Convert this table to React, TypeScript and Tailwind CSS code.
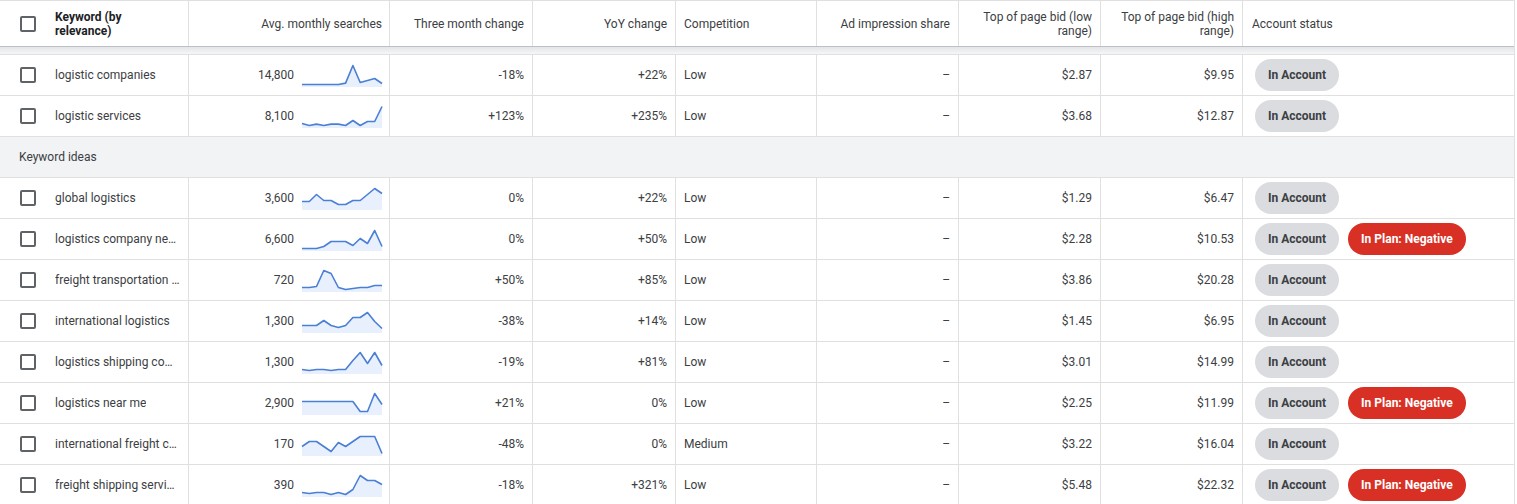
import React from "react"

type Row = {
  keyword: string
  searches: string
  trend: number[]
  threeMonth: string
  yoy: string
  competition: string
  low: string
  high: string
  negative?: boolean
}

const cols = "grid grid-cols-[189px_201px_143px_143px_141px_142px_142px_142px_1fr]"

const added: Row[] = [
  { keyword: "logistic companies", searches: "14,800", trend: [0.05, 0.05, 0.05, 0.05, 0.05, 0.05, 0.12, 1, 0.15, 0.25, 0.35, 0.1], threeMonth: "-18%", yoy: "+22%", competition: "Low", low: "$2.87", high: "$9.95" },
  { keyword: "logistic services", searches: "8,100", trend: [0.15, 0.05, 0.12, 0.05, 0.12, 0.12, 0.05, 0.3, 0.05, 0.25, 0.25, 1], threeMonth: "+123%", yoy: "+235%", competition: "Low", low: "$3.68", high: "$12.87" },
]

const ideas: Row[] = [
  { keyword: "global logistics", searches: "3,600", trend: [0.35, 0.35, 0.7, 0.4, 0.4, 0.2, 0.2, 0.4, 0.4, 0.7, 1, 0.75], threeMonth: "0%", yoy: "+22%", competition: "Low", low: "$1.29", high: "$6.47" },
  { keyword: "logistics company near me", searches: "6,600", trend: [0.05, 0.05, 0.05, 0.15, 0.4, 0.4, 0.4, 0.2, 0.55, 0.3, 0.95, 0.15], threeMonth: "0%", yoy: "+50%", competition: "Low", low: "$2.28", high: "$10.53", negative: true },
  { keyword: "freight transportation services", searches: "720", trend: [0.15, 0.15, 0.2, 1, 0.85, 0.15, 0.05, 0.1, 0.15, 0.15, 0.25, 0.25], threeMonth: "+50%", yoy: "+85%", competition: "Low", low: "$3.86", high: "$20.28" },
  { keyword: "international logistics", searches: "1,300", trend: [0.3, 0.3, 0.3, 0.55, 0.3, 0.2, 0.3, 0.7, 0.7, 0.95, 0.5, 0.15], threeMonth: "-38%", yoy: "+14%", competition: "Low", low: "$1.45", high: "$6.95" },
  { keyword: "logistics shipping company", searches: "1,300", trend: [0.15, 0.1, 0.15, 0.15, 0.1, 0.15, 0.15, 0.6, 1, 0.45, 1, 0.35], threeMonth: "-19%", yoy: "+81%", competition: "Low", low: "$3.01", high: "$14.99" },
  { keyword: "logistics near me", searches: "2,900", trend: [0.6, 0.6, 0.6, 0.6, 0.6, 0.6, 0.6, 0.6, 0.1, 0.1, 1, 0.45], threeMonth: "+21%", yoy: "0%", competition: "Low", low: "$2.25", high: "$11.99", negative: true },
  { keyword: "international freight companies", searches: "170", trend: [0.4, 0.65, 0.65, 0.4, 0.15, 0.6, 0.4, 0.65, 0.9, 0.9, 0.9, 0.05], threeMonth: "-48%", yoy: "0%", competition: "Medium", low: "$3.22", high: "$16.04" },
  { keyword: "freight shipping services", searches: "390", trend: [0.15, 0.1, 0.15, 0.15, 0.05, 0.15, 0.05, 0.3, 1, 0.75, 0.75, 0.55], threeMonth: "-18%", yoy: "+321%", competition: "Low", low: "$5.48", high: "$22.32", negative: true },
]

function Sparkline({ values }: { values: number[] }) {
  const w = 80
  const h = 23
  const step = w / (values.length - 1)
  const pts = values.map((v, i) => [i * step, 1.5 + (1 - v) * (h - 3)])
  const line = pts.map(([x, y], i) => `${i ? "L" : "M"}${x.toFixed(1)} ${y.toFixed(1)}`).join(" ")
  const area = `${line} L${w} ${h} L0 ${h} Z`
  return (
    <svg width={w} height={h} viewBox={`0 0 ${w} ${h}`} className="shrink-0 overflow-visible">
      <path d={area} fill="#e8f0fe" />
      <path d={line} fill="none" stroke="#4a7fd4" strokeWidth="1.6" strokeLinejoin="round" />
    </svg>
  )
}

function Checkbox() {
  return <div className="w-4 h-4 shrink-0 rounded-[2px] border-2 border-[#5f6368] bg-white" />
}

function KeywordRow({ row }: { row: Row }) {
  const cell = "flex items-center border-r border-[#e0e0e0] h-full"
  return (
    <div className={`${cols} h-[41px] border-b border-[#e0e0e0]`}>
      <div className={`${cell} pl-5 gap-[19px] pr-2 min-w-0`}>
        <Checkbox />
        <span className="truncate">{row.keyword}</span>
      </div>
      <div className={`${cell} justify-end gap-2 pr-[7px]`}>
        <span>{row.searches}</span>
        <Sparkline values={row.trend} />
      </div>
      <div className={`${cell} justify-end pr-2`}>{row.threeMonth}</div>
      <div className={`${cell} justify-end pr-2`}>{row.yoy}</div>
      <div className={`${cell} pl-2`}>{row.competition}</div>
      <div className={`${cell} justify-end pr-2`}>–</div>
      <div className={`${cell} justify-end pr-2`}>{row.low}</div>
      <div className={`${cell} justify-end pr-2`}>{row.high}</div>
      <div className="flex items-center gap-[9px] pl-3 h-full">
        <span className="h-8 px-[13px] rounded-full bg-[#dadce0] text-[#3c4043] font-bold flex items-center">In Account</span>
        {row.negative && (
          <span className="h-8 px-[13px] rounded-full bg-[#d93025] text-white font-bold flex items-center">In Plan: Negative</span>
        )}
      </div>
    </div>
  )
}

export default function App() {
  const head = "flex items-center border-r border-[#e0e0e0] h-full leading-[14px]"
  return (
    <div className="w-[1515px] h-[504px] overflow-hidden bg-white border-r border-[#e0e0e0] text-[12px] text-[#3c4043] font-['Roboto',sans-serif]">
      <div className={`${cols} h-[47px] border-t border-b border-[#e0e0e0] border-b-[#bdc1c6]`}>
        <div className={`${head} pl-5 gap-[19px]`}>
          <Checkbox />
          <span className="font-bold text-[#202124]">Keyword (by<br />relevance)</span>
        </div>
        <div className={`${head} justify-end pr-[7px]`}>Avg. monthly searches</div>
        <div className={`${head} justify-end pr-2`}>Three month change</div>
        <div className={`${head} justify-end pr-2`}>YoY change</div>
        <div className={`${head} pl-2`}>Competition</div>
        <div className={`${head} justify-end pr-2`}>Ad impression share</div>
        <div className={`${head} justify-end text-right pr-2`}>Top of page bid (low<br />range)</div>
        <div className={`${head} justify-end text-right pr-2`}>Top of page bid (high<br />range)</div>
        <div className="flex items-center pl-[9px] h-full">Account status</div>
      </div>
      <div className="h-[8px] bg-gradient-to-b from-[#e3e5e8] to-[#f5f6f7] border-b border-[#e0e0e0]" />
      {added.map((r) => (
        <KeywordRow key={r.keyword} row={r} />
      ))}
      <div className="h-[41px] flex items-center pl-[19px] bg-[#f1f3f4] border-b border-[#e0e0e0]">Keyword ideas</div>
      {ideas.map((r) => (
        <KeywordRow key={r.keyword} row={r} />
      ))}
    </div>
  )
}
